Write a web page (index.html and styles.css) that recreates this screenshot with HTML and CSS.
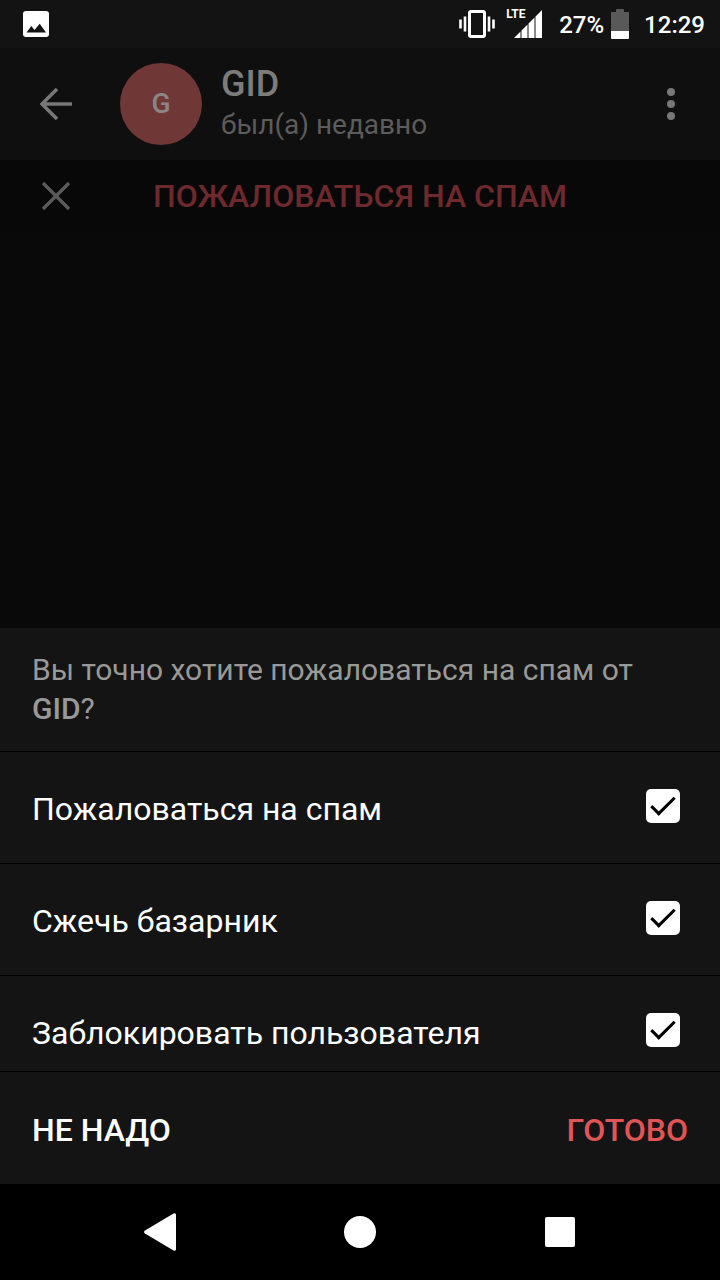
FILE: index.html
```html
<!DOCTYPE html>
<html lang="ru">
<head>
<meta charset="utf-8">
<meta name="viewport" content="width=device-width, initial-scale=1">
<title>GID</title>
<link rel="stylesheet" href="styles.css">
</head>
<body>
<div class="screen">
  <div class="status">
    <svg class="status-picture" width="26" height="26" viewBox="0 0 26 26" aria-hidden="true"><rect width="26" height="26" rx="3" fill="#fff"/><path d="M3.500 21.500 8.300 15l3.200 4 5.200-6.300 6.300 8.800z" fill="#131313"/></svg>
    <div class="status-right">
      <svg width="36" height="28" viewBox="0 0 36 28" aria-hidden="true"><rect x="10.500" y="1.500" width="15" height="25" rx="1.500" fill="none" stroke="#fff" stroke-width="3"/><path d="M1.500 9.500v9M6 6.500v15M30 6.500v15M34.500 9.500v9" stroke="#fff" stroke-width="2.600"/></svg>
      <div class="signal">
        <span class="lte">LTE</span>
        <svg width="28" height="28" viewBox="0 0 28 28" aria-hidden="true"><path d="M0 28 6.500 21.500V28zM7.500 28V20.500l6-6V28zM14.500 28V13.500l6-6V28zM21.500 28V6.500l6.500-6.500v28z" fill="#fff"/></svg>
      </div>
      <span class="percent">27%</span>
      <svg class="battery" width="18" height="30" viewBox="0 0 18 30" aria-hidden="true"><path d="M0 3h5V1q0-1 1-1h6q1 0 1 1v2h5v19H0z" fill="#595959"/><path d="M0 22h18v7q0 1-1 1H1q-1 0-1-1z" fill="#fff"/></svg>
      <span class="time">12:29</span>
    </div>
  </div>

  <header class="header">
    <button class="icon-button" aria-label="Назад"><svg width="32" height="32" viewBox="0 0 32 32"><path d="M32 16H2M17 1 2 16l15 15" fill="none" stroke="#777" stroke-width="3.600"/></svg></button>
    <div class="avatar">G</div>
    <div class="contact">
      <h1 class="contact-name">GID</h1>
      <p class="contact-seen">был(а) недавно</p>
    </div>
    <button class="icon-button" aria-label="Меню"><svg width="8" height="32" viewBox="0 0 8 32"><g fill="#777"><circle cx="4" cy="4" r="4"/><circle cx="4" cy="16" r="4"/><circle cx="4" cy="28" r="4"/></g></svg></button>
  </header>

  <div class="report">
    <button class="icon-button" aria-label="Закрыть"><svg width="28" height="28" viewBox="0 0 28 28"><path d="m1 1 26 26M27 1 1 27" fill="none" stroke="#5a5a5a" stroke-width="3.400"/></svg></button>
    <button class="report-button">ПОЖАЛОВАТЬСЯ НА СПАМ</button>
  </div>

  <main class="chat"></main>

  <form class="sheet">
    <p class="question">Вы точно хотите пожаловаться на спам от <b>GID</b>?</p>
    <label class="option">Пожаловаться на спам<input class="check" type="checkbox" checked></label>
    <label class="option">Сжечь базарник<input class="check" type="checkbox" checked></label>
    <label class="option option-last">Заблокировать пользователя<input class="check" type="checkbox" checked></label>
    <div class="actions">
      <button class="action" type="button">НЕ НАДО</button>
      <button class="action action-done" type="button">ГОТОВО</button>
    </div>
  </form>

  <nav class="system">
    <button class="icon-button" aria-label="Назад"><svg width="32" height="38" viewBox="0 0 32 38"><path d="M1 17.500 29.500.500Q32-.500 32 2v34q0 2.500-2.500 1.500L1 20.500q-2-1.500 0-3z" fill="#fff"/></svg></button>
    <button class="icon-button" aria-label="Домой"><svg width="32" height="32" viewBox="0 0 32 32"><circle cx="16" cy="16" r="16" fill="#fff"/></svg></button>
    <button class="icon-button" aria-label="Недавние"><svg width="30" height="30" viewBox="0 0 30 30"><rect width="30" height="30" rx="2" fill="#fff"/></svg></button>
  </nav>
</div>
</body>
</html>
```
FILE: styles.css
```css
*,
*::before {
  box-sizing: border-box;
}

body {
  margin: 0;
  background: #090909;
  color: #fff;
  font-family: Roboto, "Noto Sans", sans-serif;
}

button {
  padding: 0;
  border: 0;
  background: none;
  color: inherit;
  font: inherit;
}

svg {
  display: block;
}

.screen {
  display: flex;
  flex-direction: column;
  min-height: 100vh;
}

.status {
  display: flex;
  justify-content: space-between;
  align-items: center;
  height: 48px;
  padding: 0 15px 0 23px;
  background: #131313;
  font-size: 24px;
  font-weight: 500;
  line-height: 28px;
}

.status-right {
  display: flex;
  align-items: center;
}

.signal {
  position: relative;
  margin: 0 17px 0 19px;
}

.lte {
  position: absolute;
  top: -2px;
  left: -8px;
  font-size: 12px;
  font-weight: 700;
  line-height: 12px;
}

.percent,
.time {
  padding-top: 2px;
}

.battery {
  margin: 0 15px 0 7px;
}

.header {
  display: flex;
  align-items: center;
  height: 112px;
  background: #0f0f0f;
}

.icon-button {
  display: flex;
  flex: none;
  align-items: center;
  justify-content: center;
  width: 112px;
  height: 72px;
}

.avatar {
  flex: none;
  width: 82px;
  height: 82px;
  margin: 0 19px 0 8px;
  border-radius: 50%;
  background: #6f3836;
  color: #8b8686;
  font-size: 28px;
  font-weight: 500;
  line-height: 82px;
  text-align: center;
}

.contact {
  flex: 1;
}

.header .icon-button:last-child {
  width: 98px;
}

.contact-name {
  margin: 0;
  color: #7c7c7c;
  font-size: 36px;
  font-weight: 500;
  line-height: 42px;
}

.contact-seen {
  margin: 0;
  color: #5c5c5c;
  font-size: 28px;
  line-height: 40px;
}

.report {
  display: flex;
  align-items: center;
  height: 72px;
  padding-right: 112px;
  background: #080808;
}

.report-button {
  flex: 1;
  color: #6d292c;
  font-size: 32px;
  font-weight: 500;
}

.chat {
  flex: 1;
}

.sheet {
  background: #141414;
}

.question {
  margin: 0;
  padding: 22px 48px 23px 32px;
  border-bottom: 1px solid #000;
  color: #999;
  font-size: 30px;
  line-height: 39px;
}

.question b {
  font-weight: 500;
}

.option {
  display: flex;
  align-items: flex-start;
  justify-content: space-between;
  padding: 37px 40px 34px 32px;
  border-bottom: 1px solid #000;
  font-size: 32px;
  line-height: 40px;
}

.option-last {
  padding-bottom: 18px;
}

.check {
  display: grid;
  flex: none;
  place-items: center;
  width: 34px;
  height: 34px;
  margin: 0;
  border-radius: 5px;
  appearance: none;
  background: #fff;
}

.check:checked::before {
  width: 24px;
  height: 12px;
  margin-bottom: 6px;
  border: solid #000;
  border-width: 0 0 3px 3px;
  content: "";
  transform: rotate(-45deg);
}

.actions {
  display: flex;
  align-items: center;
  justify-content: space-between;
  height: 112px;
  padding: 4px 32px 0;
}

.action {
  font-size: 32px;
  font-weight: 500;
  line-height: 40px;
}

.action-done {
  color: #e05556;
}

.system {
  display: flex;
  align-items: center;
  justify-content: center;
  gap: 88px;
  height: 96px;
  background: #000;
}
```
